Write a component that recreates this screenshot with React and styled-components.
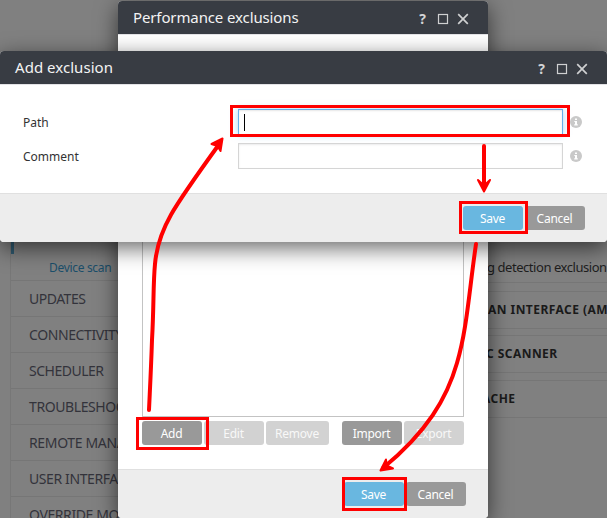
import React, { Component } from 'react';
import styled, { createGlobalStyle } from 'styled-components';

const menuItems = [
    { label: 'UPDATES', spacing: -0.5 },
    { label: 'CONNECTIVITY', spacing: -0.4 },
    { label: 'SCHEDULER', spacing: -0.5 },
    { label: 'TROUBLESHOO', spacing: -0.4 },
    { label: 'REMOTE MANA', spacing: -0.35 },
    { label: 'USER INTERFAC', spacing: -0.4 },
    { label: 'OVERRIDE MO', spacing: -0.4 },
];

const WindowControls = () => (
    <Controls viewBox="0 0 52 16">
        <text x="0.3" y="13" fontSize="14" fontWeight="700" fill="#d3d4d6">?</text>
        <rect x="19.5" y="3.5" width="9" height="9" fill="none" stroke="#cfd0d1" strokeWidth="1.2" />
        <path d="M39.2 3.2l9.6 9.6M48.8 3.2l-9.6 9.6" fill="none" stroke="#cfd0d1" strokeWidth="1.7" />
    </Controls>
);

const InfoIcon = () => (
    <Info viewBox="0 0 12 12">
        <circle cx="6" cy="6" r="6" fill="#c9c9c9" />
        <path d="M5 2.6h2v1.5H5zM4.3 5H7v3.3h.8v1.1H4.2V8.3H5V6h-.7z" fill="#fff" />
    </Info>
);

// red boxes and arrows which show the order of the steps
const Steps = () => (
    <StepsLayer viewBox="0 0 607 518">
        <g fill="none" stroke="#f00" strokeWidth="3">
            <rect x="231.5" y="106.5" width="337" height="29" />
            <rect x="460.5" y="202.5" width="66" height="30" />
            <rect x="137.5" y="418.5" width="70" height="30" />
            <rect x="343.5" y="478.5" width="62" height="31" />
        </g>
        <g fill="none" stroke="#f00" strokeWidth="4" strokeLinecap="round">
            <path d="M149 410C150 388 151 370 152 340C154 305 153 285 155 264C158 229 173 208 220 143" />
            <path d="M484 146V187" />
            <path d="M476 244C469 292 467 329 457 363C447 398 427 432 383 468" />
        </g>
        <g fill="#f00" stroke="#f00" strokeWidth="2" strokeLinecap="round" strokeLinejoin="round">
            <path d="M211.5 144L222.5 138.5L220.5 151L217.5 146Z" />
            <path d="M478 180L484 191.5L490 180L484 185.5Z" />
            <path d="M386 459.5L380.5 470.5L393 468.5L386.5 465.5Z" />
        </g>
    </StepsLayer>
);

export default class App extends Component {
    render() {
        return (
            <Screen>
                <GlobalStyle />
                <Sidebar>
                    <ActiveGroup />
                    <SubItem>Device scan</SubItem>
                    {menuItems.map((item) => (
                        <MenuItem key={item.label} $spacing={item.spacing}>{item.label}</MenuItem>
                    ))}
                </Sidebar>
                <Content>
                    <Setting>g detection exclusion</Setting>
                    <Section $gap={8}>AN INTERFACE (AM</Section>
                    <Section $gap={6} $shift={-2}>C SCANNER</Section>
                    <Section $gap={7} $shift={-6}>ACHE</Section>
                </Content>

                <ListDialog>
                    <Header>
                        <Title $spacing={-0.12}>Performance exclusions</Title>
                        <WindowControls />
                    </Header>
                    <ListBody>
                        <List />
                        <Toolbar>
                            <Button>Add</Button>
                            <Button $disabled>Edit</Button>
                            <Button $disabled $width={63}>Remove</Button>
                            <Spacer />
                            <Button>Import</Button>
                            <Button $disabled>Export</Button>
                        </Toolbar>
                    </ListBody>
                    <Footer>
                        <Button $primary>Save</Button>
                        <Button>Cancel</Button>
                    </Footer>
                </ListDialog>

                <AddDialog>
                    <Header>
                        <Title $spacing={0.04}>Add exclusion</Title>
                        <WindowControls />
                    </Header>
                    <Form>
                        <Field>
                            <Label>Path</Label>
                            <Input $focused><Caret /></Input>
                            <InfoIcon />
                        </Field>
                        <Field>
                            <Label>Comment</Label>
                            <Input />
                            <InfoIcon />
                        </Field>
                    </Form>
                    <Footer>
                        <Button $primary>Save</Button>
                        <Button>Cancel</Button>
                    </Footer>
                </AddDialog>

                <Steps />
            </Screen>
        );
    }
}

const GlobalStyle = createGlobalStyle`
    * {
        box-sizing: border-box;
    }
    body {
        margin: 0;
        font-family: "Noto Sans", "Open Sans", sans-serif;
    }
`;

const Screen = styled.div`
    position: relative;
    display: flex;
    justify-content: space-between;
    width: 607px;
    height: 518px;
    overflow: hidden;
    background: #808080;
`;

const Sidebar = styled.div`
    width: 140px;
    margin: 194px 0 0 10px;
    border-left: 1px solid #777;
`;

const ActiveGroup = styled.div`
    width: 3px;
    height: 60px;
    background: #2f5a70;
`;

const SubItem = styled.div`
    height: 26px;
    padding-left: 38px;
    line-height: 28px;
    font-size: 12px;
    letter-spacing: -0.32px;
    color: #1b4f6b;
`;

const MenuItem = styled.div`
    height: 36px;
    padding-left: 18px;
    border-top: 1px solid #767676;
    line-height: 36px;
    font-size: 14px;
    letter-spacing: ${(props) => props.$spacing}px;
    white-space: nowrap;
    color: #33333b;
`;

const Content = styled.div`
    width: 140px;
    padding-top: 253px;
`;

const Setting = styled.div`
    height: 30px;
    padding-left: 20px;
    border-bottom: 1px solid #767676;
    line-height: 28px;
    font-size: 13px;
    letter-spacing: -0.45px;
    white-space: nowrap;
    color: #1e1e1e;
`;

const Section = styled.div`
    height: 38px;
    margin-top: ${(props) => props.$gap}px;
    padding-left: 21px;
    border-top: 1px solid #767676;
    border-bottom: 1px solid #767676;
    line-height: 35px;
    font-size: 12px;
    font-weight: 700;
    letter-spacing: 0.45px;
    white-space: nowrap;
    text-indent: ${(props) => props.$shift || 0}px;
    color: #1a1a1a;
`;

const Dialog = styled.div`
    position: absolute;
    display: flex;
    flex-direction: column;
    overflow: hidden;
    border-radius: 4px;
    background: #fff;
    box-shadow: 0 6px 22px rgba(0, 0, 0, 0.6);
`;

const ListDialog = styled(Dialog)`
    left: 118px;
    top: 1px;
    width: 370px;
    height: 517px;
`;

const AddDialog = styled(Dialog)`
    left: 0;
    top: 51px;
    width: 607px;
    height: 191px;
`;

const Header = styled.div`
    display: flex;
    flex-shrink: 0;
    align-items: center;
    justify-content: space-between;
    height: 34px;
    padding: 0 17px 0 15px;
    border-bottom: 1px solid #e3e3e6;
    background: #383c43;
`;

const Title = styled.div`
    margin-top: -2px;
    font-size: 15px;
    letter-spacing: ${(props) => props.$spacing}px;
    color: #f3f3f3;
`;

const Controls = styled.svg`
    width: 52px;
    height: 16px;
    margin-top: 3px;
`;

const ListBody = styled.div`
    display: flex;
    flex: 1;
    flex-direction: column;
    padding: 20px 24px 24px;
`;

const List = styled.div`
    flex: 1;
    border: 1px solid #c3c3c3;
`;

const Toolbar = styled.div`
    display: flex;
    gap: 2px;
    margin-top: 4px;
`;

const Spacer = styled.div`
    flex: 1;
`;

const buttonColor = (props) => {
    if (props.$primary) return '#69b7e0';
    if (props.$disabled) return '#d2d2d2';
    return '#999';
};

const Button = styled.button`
    width: ${(props) => props.$width || 60}px;
    height: 24px;
    padding: 0 1px 0 0;
    border: 0;
    border-radius: 3px;
    background: ${buttonColor};
    color: ${(props) => (props.$disabled ? '#f8f8f8' : '#fff')};
    font-family: inherit;
    font-size: 12px;
    letter-spacing: -0.25px;
    cursor: pointer;
`;

const Footer = styled.div`
    display: flex;
    flex-shrink: 0;
    gap: 2px;
    justify-content: flex-end;
    height: 49px;
    padding: 12px 22px 0;
    border-top: 1px solid #e0e0e0;
    background: #ededed;
`;

const Form = styled.div`
    display: flex;
    flex: 1;
    flex-direction: column;
    gap: 8px;
    padding: 24px 24px 0 23px;
`;

const Field = styled.label`
    display: flex;
    align-items: center;
    height: 26px;
`;

const Label = styled.span`
    width: 215px;
    font-size: 12px;
    color: #333;
`;

const Input = styled.div`
    width: 325px;
    height: 26px;
    padding: 4px 5px;
    border: 1px solid ${(props) => (props.$focused ? '#66afe9' : '#d5d5d5')};
    box-shadow: ${(props) => (props.$focused
        ? 'inset 0 1px 2px rgba(0, 0, 0, 0.1), 0 0 7px rgba(102, 175, 233, 0.55)'
        : 'inset 0 1px 2px rgba(0, 0, 0, 0.08)')};
`;

const Caret = styled.div`
    width: 1px;
    height: 17px;
    background: #000;
`;

const Info = styled.svg`
    width: 12px;
    height: 12px;
    margin-left: 7px;
`;

const StepsLayer = styled.svg`
    position: absolute;
    left: 0;
    top: 0;
    width: 607px;
    height: 518px;
    pointer-events: none;
`;
